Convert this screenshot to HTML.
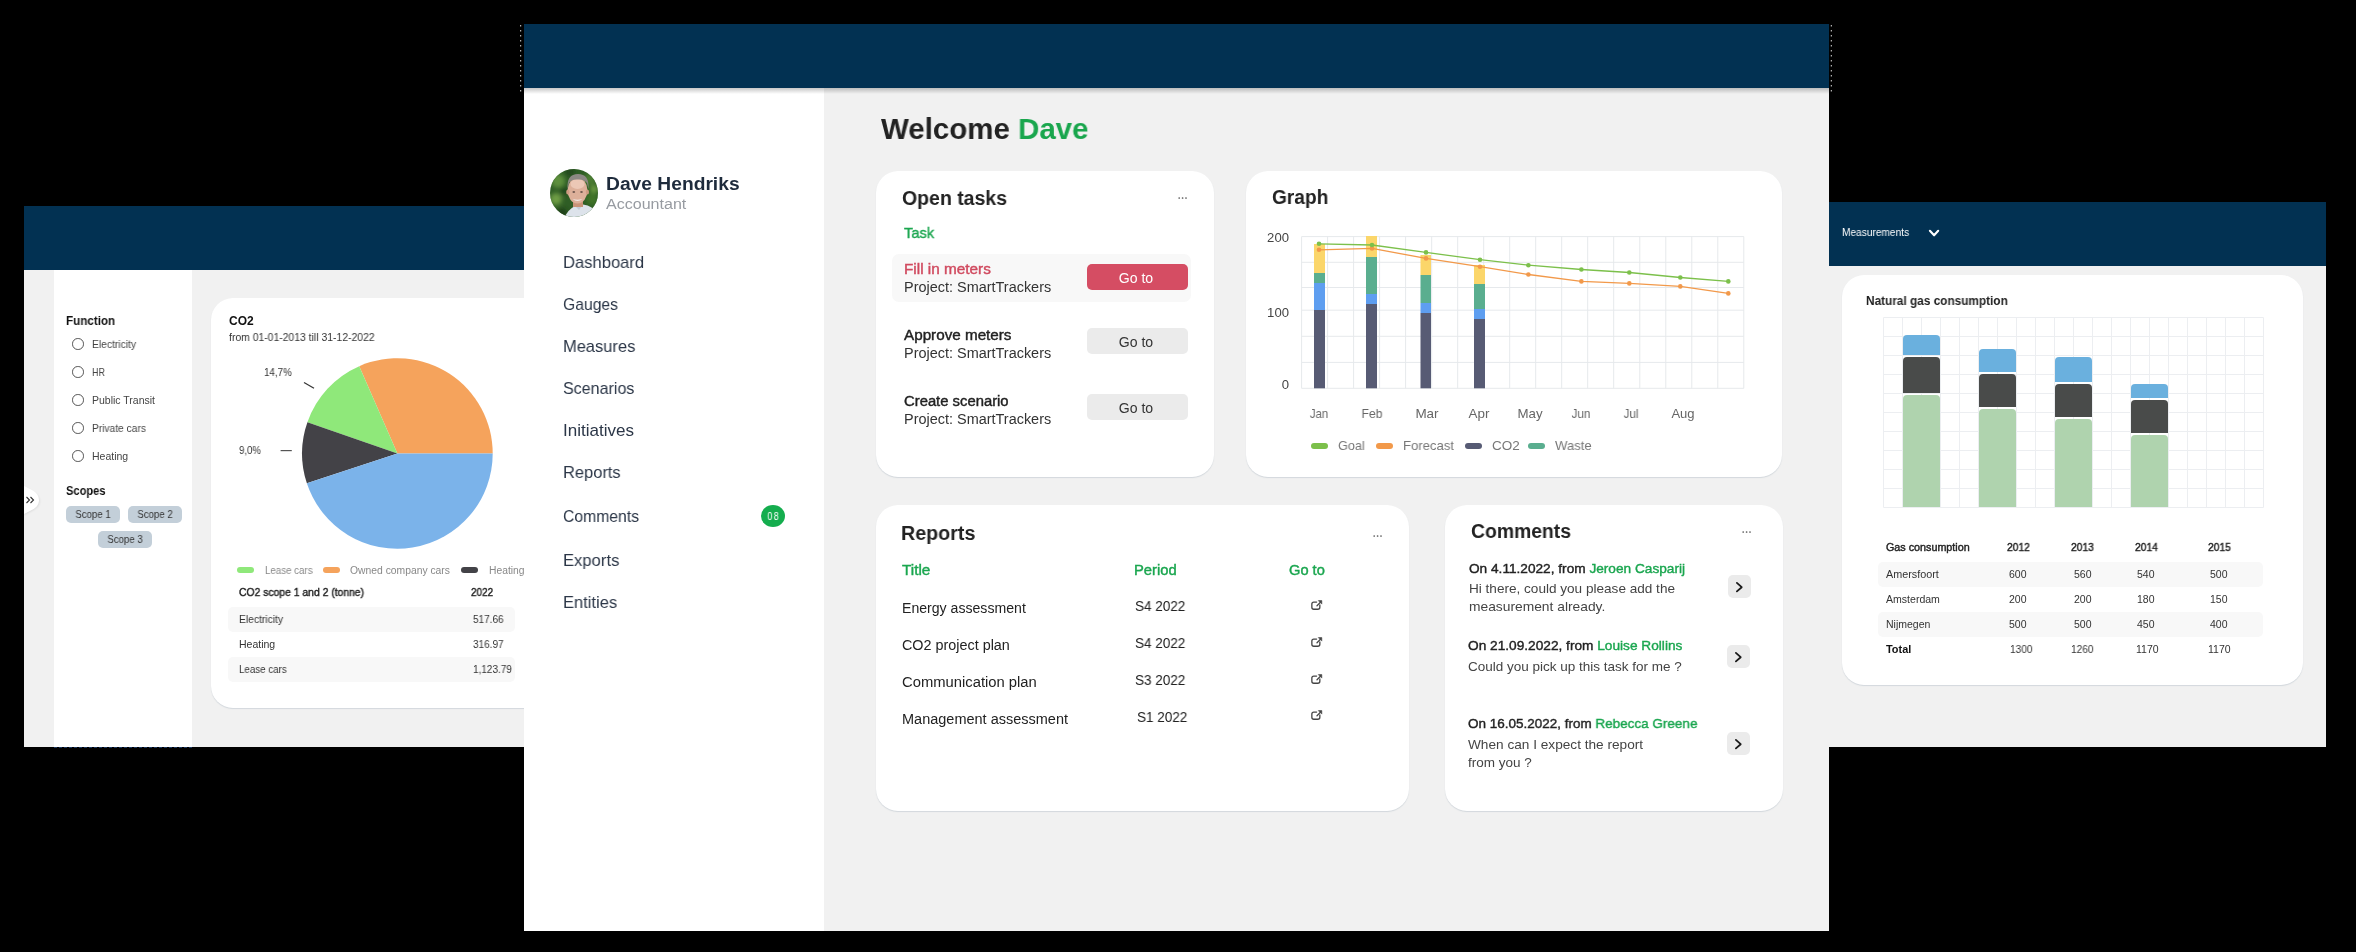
<!DOCTYPE html>
<html><head><meta charset="utf-8"><style>
html,body{margin:0;padding:0;}
body{width:2356px;height:952px;background:#000;position:relative;overflow:hidden;font-family:"Liberation Sans",sans-serif;}
.t{position:absolute;line-height:1;white-space:nowrap;will-change:transform;}
</style></head><body>
<div style="position:absolute;left:24px;top:206px;width:500px;height:64px;background:#023152;"></div>
<div style="position:absolute;left:24px;top:270px;width:500px;height:477px;background:#f1f1f1;"></div>
<div style="position:absolute;left:54px;top:270px;width:138px;height:477px;background:#ffffff;"></div>
<svg style="position:absolute;left:24px;top:480px" width="20" height="40" viewBox="0 0 20 40"><defs><filter id="tsh" x="-50%" y="-50%" width="200%" height="200%"><feGaussianBlur stdDeviation="1.2"/></filter></defs><path d="M0 7 C5 10 15 12 15 20 C15 28 5 30 0 34 Z" fill="rgba(0,0,0,0.12)" filter="url(#tsh)" transform="translate(0.5,1)"/><path d="M0 6 C5 9 15 11 15 20 C15 29 5 31 0 34 Z" fill="#fff"/><path d="M2.5 17 L5.5 20 L2.5 23 M6.5 17 L9.5 20 L6.5 23" stroke="#333" stroke-width="1.1" fill="none"/></svg>
<div class="t" style="left:66px;top:314.64px;font-size:12px;color:#111;font-weight:700;transform:scaleX(0.9693);transform-origin:left 0;"><span>Function</span></div>
<div style="position:absolute;left:72px;top:338px;width:9.6px;height:9.6px;border:1.2px solid #555;border-radius:50%"></div>
<div class="t" style="left:92.2px;top:338.91px;font-size:10.5px;color:#444;font-weight:400;transform:scaleX(0.9814);transform-origin:left 0;"><span>Electricity</span></div>
<div style="position:absolute;left:72px;top:366px;width:9.6px;height:9.6px;border:1.2px solid #555;border-radius:50%"></div>
<div class="t" style="left:92.2px;top:366.91px;font-size:10.5px;color:#444;font-weight:400;transform:scaleX(0.8634);transform-origin:left 0;"><span>HR</span></div>
<div style="position:absolute;left:72px;top:394px;width:9.6px;height:9.6px;border:1.2px solid #555;border-radius:50%"></div>
<div class="t" style="left:92.2px;top:394.91px;font-size:10.5px;color:#444;font-weight:400;transform:scaleX(0.9947);transform-origin:left 0;"><span>Public Transit</span></div>
<div style="position:absolute;left:72px;top:422px;width:9.6px;height:9.6px;border:1.2px solid #555;border-radius:50%"></div>
<div class="t" style="left:92.2px;top:422.91px;font-size:10.5px;color:#444;font-weight:400;transform:scaleX(0.9723);transform-origin:left 0;"><span>Private cars</span></div>
<div style="position:absolute;left:72px;top:450px;width:9.6px;height:9.6px;border:1.2px solid #555;border-radius:50%"></div>
<div class="t" style="left:92.2px;top:450.91px;font-size:10.5px;color:#444;font-weight:400;transform:scaleX(0.9889);transform-origin:left 0;"><span>Heating</span></div>
<div class="t" style="left:66px;top:485.24px;font-size:12px;color:#111;font-weight:700;transform:scaleX(0.9253);transform-origin:left 0;"><span>Scopes</span></div>
<div style="position:absolute;left:66px;top:506px;width:54px;height:16.5px;background:#c3cfd9;border-radius:5px"></div>
<div class="t" style="left:-207.0px;width:600px;text-align:center;top:508.91px;font-size:10.5px;color:#333;font-weight:400;transform:scaleX(0.9161);transform-origin:center 0;"><span>Scope 1</span></div>
<div style="position:absolute;left:128px;top:506px;width:54px;height:16.5px;background:#c3cfd9;border-radius:5px"></div>
<div class="t" style="left:-145.0px;width:600px;text-align:center;top:508.91px;font-size:10.5px;color:#333;font-weight:400;transform:scaleX(0.9161);transform-origin:center 0;"><span>Scope 2</span></div>
<div style="position:absolute;left:98.3px;top:531.4px;width:53.7px;height:16.399999999999977px;background:#c3cfd9;border-radius:5px"></div>
<div class="t" style="left:-174.85px;width:600px;text-align:center;top:534.31px;font-size:10.5px;color:#333;font-weight:400;transform:scaleX(0.9161);transform-origin:center 0;"><span>Scope 3</span></div>
<div style="position:absolute;left:211px;top:298px;width:349px;height:410px;background:#fff;border-radius:22px;box-shadow:0 1px 1px rgba(120,140,160,0.25)"></div>
<div class="t" style="left:229px;top:314.84px;font-size:12px;color:#111;font-weight:700;"><span>CO2</span></div>
<div class="t" style="left:229px;top:332.11px;font-size:10.5px;color:#333;font-weight:400;transform:scaleX(0.9898);transform-origin:left 0;"><span>from 01-01-2013 till 31-12-2022</span></div>
<svg style="position:absolute;left:0;top:0" width="2356" height="952"><path d="M397.4 453.5 L492.70 453.50 A95.3 95.3 0 0 0 359.25 366.17 Z" fill="#f5a35c"/><path d="M397.4 453.5 L359.25 366.17 A95.3 95.3 0 0 0 307.40 422.16 Z" fill="#8fe87a"/><path d="M397.4 453.5 L307.40 422.16 A95.3 95.3 0 0 0 306.87 483.27 Z" fill="#434247"/><path d="M397.4 453.5 L306.87 483.27 A95.3 95.3 0 0 0 492.70 453.50 Z" fill="#7bb3ea"/><line x1="304" y1="382.4" x2="314" y2="388.2" stroke="#333" stroke-width="1.2"/><line x1="280.6" y1="450.6" x2="291.8" y2="450.6" stroke="#555" stroke-width="1.2"/></svg>
<div class="t" style="left:264px;top:367.41px;font-size:10.5px;color:#333;font-weight:400;transform:scaleX(0.9335);transform-origin:left 0;"><span>14,7%</span></div>
<div class="t" style="left:239px;top:444.51px;font-size:10.5px;color:#333;font-weight:400;transform:scaleX(0.9191);transform-origin:left 0;"><span>9,0%</span></div>
<div style="position:absolute;left:237px;top:567.3px;width:17px;height:5.5px;background:#8fe87a;border-radius:3px"></div>
<div class="t" style="left:264.6px;top:565.63px;font-size:10px;color:#888;font-weight:400;transform:scaleX(0.9709);transform-origin:left 0;"><span>Lease cars</span></div>
<div style="position:absolute;left:323px;top:567.3px;width:17px;height:5.5px;background:#f5a35c;border-radius:3px"></div>
<div class="t" style="left:350.4px;top:565.63px;font-size:10px;color:#888;font-weight:400;transform:scaleX(1.0339);transform-origin:left 0;"><span>Owned company cars</span></div>
<div style="position:absolute;left:461px;top:567.3px;width:17px;height:5.5px;background:#434247;border-radius:3px"></div>
<div class="t" style="left:488.6px;top:565.63px;font-size:10px;color:#888;font-weight:400;transform:scaleX(1.0299);transform-origin:left 0;"><span>Heating</span></div>
<div class="t" style="left:239.3px;top:586.81px;font-size:10.5px;color:#222;font-weight:400;transform:scaleX(0.9868);transform-origin:left 0;-webkit-text-stroke:0.4px currentColor;"><span>CO2 scope 1 and 2 (tonne)</span></div>
<div class="t" style="left:471.2px;top:586.81px;font-size:10.5px;color:#222;font-weight:400;transform:scaleX(0.9461);transform-origin:left 0;-webkit-text-stroke:0.4px currentColor;"><span>2022</span></div>
<div style="position:absolute;left:228px;top:607px;width:287px;height:25px;background:#f8f8f8;border-radius:5px"></div>
<div style="position:absolute;left:228px;top:657px;width:287px;height:25px;background:#f8f8f8;border-radius:5px"></div>
<div class="t" style="left:239.3px;top:613.71px;font-size:10.5px;color:#333;font-weight:400;transform:scaleX(0.9814);transform-origin:left 0;"><span>Electricity</span></div>
<div class="t" style="left:473.3px;top:613.71px;font-size:10.5px;color:#333;font-weight:400;transform:scaleX(0.9525);transform-origin:left 0;"><span>517.66</span></div>
<div class="t" style="left:239.3px;top:639.01px;font-size:10.5px;color:#333;font-weight:400;transform:scaleX(0.9889);transform-origin:left 0;"><span>Heating</span></div>
<div class="t" style="left:473.3px;top:639.01px;font-size:10.5px;color:#333;font-weight:400;transform:scaleX(0.9525);transform-origin:left 0;"><span>316.97</span></div>
<div class="t" style="left:239.3px;top:663.51px;font-size:10.5px;color:#333;font-weight:400;transform:scaleX(0.9304);transform-origin:left 0;"><span>Lease cars</span></div>
<div class="t" style="left:473.3px;top:663.51px;font-size:10.5px;color:#333;font-weight:400;transform:scaleX(0.9517);transform-origin:left 0;"><span>1,123.79</span></div>
<div style="position:absolute;left:1829px;top:202px;width:497px;height:64px;background:#023152;"></div>
<div style="position:absolute;left:1829px;top:266px;width:497px;height:481px;background:#f1f1f1;"></div>
<div class="t" style="left:1842px;top:227.11px;font-size:10.5px;color:#fff;font-weight:400;transform:scaleX(0.9661);transform-origin:left 0;"><span>Measurements</span></div>
<svg style="position:absolute;left:1927px;top:228px" width="14" height="10"><path d="M2.9 2.8 L7.1 7.3 L11.2 2.8" stroke="#fff" stroke-width="2.1" fill="none" stroke-linecap="round" stroke-linejoin="round"/></svg>
<div style="position:absolute;left:1842px;top:275px;width:461px;height:410px;background:#fff;border-radius:22px;box-shadow:0 1px 1px rgba(120,140,160,0.25)"></div>
<div class="t" style="left:1866.4px;top:294.84px;font-size:12px;color:#222;font-weight:700;transform:scaleX(0.9845);transform-origin:left 0;"><span>Natural gas consumption</span></div>
<svg style="position:absolute;left:0;top:0" width="2356" height="952"><line x1="1883.5" y1="317.5" x2="1883.5" y2="507.5" stroke="#eceef1" stroke-width="1"/><line x1="1902.5" y1="317.5" x2="1902.5" y2="507.5" stroke="#eceef1" stroke-width="1"/><line x1="1921.5" y1="317.5" x2="1921.5" y2="507.5" stroke="#eceef1" stroke-width="1"/><line x1="1940.5" y1="317.5" x2="1940.5" y2="507.5" stroke="#eceef1" stroke-width="1"/><line x1="1959.5" y1="317.5" x2="1959.5" y2="507.5" stroke="#eceef1" stroke-width="1"/><line x1="1978.5" y1="317.5" x2="1978.5" y2="507.5" stroke="#eceef1" stroke-width="1"/><line x1="1997.5" y1="317.5" x2="1997.5" y2="507.5" stroke="#eceef1" stroke-width="1"/><line x1="2016.5" y1="317.5" x2="2016.5" y2="507.5" stroke="#eceef1" stroke-width="1"/><line x1="2035.5" y1="317.5" x2="2035.5" y2="507.5" stroke="#eceef1" stroke-width="1"/><line x1="2054.5" y1="317.5" x2="2054.5" y2="507.5" stroke="#eceef1" stroke-width="1"/><line x1="2073.5" y1="317.5" x2="2073.5" y2="507.5" stroke="#eceef1" stroke-width="1"/><line x1="2092.5" y1="317.5" x2="2092.5" y2="507.5" stroke="#eceef1" stroke-width="1"/><line x1="2111.5" y1="317.5" x2="2111.5" y2="507.5" stroke="#eceef1" stroke-width="1"/><line x1="2130.5" y1="317.5" x2="2130.5" y2="507.5" stroke="#eceef1" stroke-width="1"/><line x1="2149.5" y1="317.5" x2="2149.5" y2="507.5" stroke="#eceef1" stroke-width="1"/><line x1="2168.5" y1="317.5" x2="2168.5" y2="507.5" stroke="#eceef1" stroke-width="1"/><line x1="2187.5" y1="317.5" x2="2187.5" y2="507.5" stroke="#eceef1" stroke-width="1"/><line x1="2206.5" y1="317.5" x2="2206.5" y2="507.5" stroke="#eceef1" stroke-width="1"/><line x1="2225.5" y1="317.5" x2="2225.5" y2="507.5" stroke="#eceef1" stroke-width="1"/><line x1="2244.5" y1="317.5" x2="2244.5" y2="507.5" stroke="#eceef1" stroke-width="1"/><line x1="2263.5" y1="317.5" x2="2263.5" y2="507.5" stroke="#eceef1" stroke-width="1"/><line x1="1883.5" y1="317.5" x2="2263.5" y2="317.5" stroke="#eceef1" stroke-width="1"/><line x1="1883.5" y1="336.5" x2="2263.5" y2="336.5" stroke="#eceef1" stroke-width="1"/><line x1="1883.5" y1="355.5" x2="2263.5" y2="355.5" stroke="#eceef1" stroke-width="1"/><line x1="1883.5" y1="374.5" x2="2263.5" y2="374.5" stroke="#eceef1" stroke-width="1"/><line x1="1883.5" y1="393.5" x2="2263.5" y2="393.5" stroke="#eceef1" stroke-width="1"/><line x1="1883.5" y1="412.5" x2="2263.5" y2="412.5" stroke="#eceef1" stroke-width="1"/><line x1="1883.5" y1="431.5" x2="2263.5" y2="431.5" stroke="#eceef1" stroke-width="1"/><line x1="1883.5" y1="450.5" x2="2263.5" y2="450.5" stroke="#eceef1" stroke-width="1"/><line x1="1883.5" y1="469.5" x2="2263.5" y2="469.5" stroke="#eceef1" stroke-width="1"/><line x1="1883.5" y1="488.5" x2="2263.5" y2="488.5" stroke="#eceef1" stroke-width="1"/><line x1="1883.5" y1="507.5" x2="2263.5" y2="507.5" stroke="#eceef1" stroke-width="1"/><path d="M1903 507 L1903 399 Q1903 395 1907 395 L1936 395 Q1940 395 1940 399 L1940 507 Z" fill="#afd3ae"/><path d="M1903 393 L1903 361 Q1903 357 1907 357 L1936 357 Q1940 357 1940 361 L1940 393 Z" fill="#494b4a"/><path d="M1903 355 L1903 339 Q1903 335 1907 335 L1936 335 Q1940 335 1940 339 L1940 355 Z" fill="#6ab0de"/><path d="M1979 507 L1979 413 Q1979 409 1983 409 L2012 409 Q2016 409 2016 413 L2016 507 Z" fill="#afd3ae"/><path d="M1979 407 L1979 378 Q1979 374 1983 374 L2012 374 Q2016 374 2016 378 L2016 407 Z" fill="#494b4a"/><path d="M1979 372 L1979 353 Q1979 349 1983 349 L2012 349 Q2016 349 2016 353 L2016 372 Z" fill="#6ab0de"/><path d="M2055 507 L2055 423 Q2055 419 2059 419 L2088 419 Q2092 419 2092 423 L2092 507 Z" fill="#afd3ae"/><path d="M2055 417 L2055 388 Q2055 384 2059 384 L2088 384 Q2092 384 2092 388 L2092 417 Z" fill="#494b4a"/><path d="M2055 382 L2055 361 Q2055 357 2059 357 L2088 357 Q2092 357 2092 361 L2092 382 Z" fill="#6ab0de"/><path d="M2131 507 L2131 439 Q2131 435 2135 435 L2164 435 Q2168 435 2168 439 L2168 507 Z" fill="#afd3ae"/><path d="M2131 433 L2131 404 Q2131 400 2135 400 L2164 400 Q2168 400 2168 404 L2168 433 Z" fill="#494b4a"/><path d="M2131 398 L2131 388 Q2131 384 2135 384 L2164 384 Q2168 384 2168 388 L2168 398 Z" fill="#6ab0de"/></svg>
<div class="t" style="left:1886.1px;top:542.11px;font-size:10.5px;color:#222;font-weight:400;transform:scaleX(1.0242);transform-origin:left 0;-webkit-text-stroke:0.4px currentColor;"><span>Gas consumption</span></div>
<div class="t" style="left:2007px;top:542.11px;font-size:10.5px;color:#222;font-weight:400;transform:scaleX(0.9761);transform-origin:left 0;-webkit-text-stroke:0.4px currentColor;"><span>2012</span></div>
<div class="t" style="left:2070.8px;top:542.11px;font-size:10.5px;color:#222;font-weight:400;transform:scaleX(0.9761);transform-origin:left 0;-webkit-text-stroke:0.4px currentColor;"><span>2013</span></div>
<div class="t" style="left:2135px;top:542.11px;font-size:10.5px;color:#222;font-weight:400;transform:scaleX(0.9761);transform-origin:left 0;-webkit-text-stroke:0.4px currentColor;"><span>2014</span></div>
<div class="t" style="left:2207.8px;top:542.11px;font-size:10.5px;color:#222;font-weight:400;transform:scaleX(0.9761);transform-origin:left 0;-webkit-text-stroke:0.4px currentColor;"><span>2015</span></div>
<div style="position:absolute;left:1878px;top:562px;width:385px;height:25px;background:#f8f8f8;border-radius:5px"></div>
<div style="position:absolute;left:1878px;top:612px;width:385px;height:25px;background:#f8f8f8;border-radius:5px"></div>
<div class="t" style="left:1886.1px;top:569.11px;font-size:10.5px;color:#333;font-weight:400;transform:scaleX(1.0280);transform-origin:left 0;"><span>Amersfoort</span></div>
<div class="t" style="left:2009px;top:569.11px;font-size:10.5px;color:#333;font-weight:400;transform:scaleX(0.9754);transform-origin:left 0;"><span>600</span></div>
<div class="t" style="left:2074px;top:569.11px;font-size:10.5px;color:#333;font-weight:400;transform:scaleX(0.9754);transform-origin:left 0;"><span>560</span></div>
<div class="t" style="left:2137px;top:569.11px;font-size:10.5px;color:#333;font-weight:400;transform:scaleX(0.9754);transform-origin:left 0;"><span>540</span></div>
<div class="t" style="left:2209.8px;top:569.11px;font-size:10.5px;color:#333;font-weight:400;transform:scaleX(0.9754);transform-origin:left 0;"><span>500</span></div>
<div class="t" style="left:1886.1px;top:593.91px;font-size:10.5px;color:#333;font-weight:400;transform:scaleX(1.0040);transform-origin:left 0;"><span>Amsterdam</span></div>
<div class="t" style="left:2009px;top:593.91px;font-size:10.5px;color:#333;font-weight:400;transform:scaleX(0.9754);transform-origin:left 0;"><span>200</span></div>
<div class="t" style="left:2074px;top:593.91px;font-size:10.5px;color:#333;font-weight:400;transform:scaleX(0.9754);transform-origin:left 0;"><span>200</span></div>
<div class="t" style="left:2137px;top:593.91px;font-size:10.5px;color:#333;font-weight:400;transform:scaleX(0.9754);transform-origin:left 0;"><span>180</span></div>
<div class="t" style="left:2209.8px;top:593.91px;font-size:10.5px;color:#333;font-weight:400;transform:scaleX(0.9754);transform-origin:left 0;"><span>150</span></div>
<div class="t" style="left:1886.1px;top:618.91px;font-size:10.5px;color:#333;font-weight:400;transform:scaleX(1.0009);transform-origin:left 0;"><span>Nijmegen</span></div>
<div class="t" style="left:2009px;top:618.91px;font-size:10.5px;color:#333;font-weight:400;transform:scaleX(0.9754);transform-origin:left 0;"><span>500</span></div>
<div class="t" style="left:2074px;top:618.91px;font-size:10.5px;color:#333;font-weight:400;transform:scaleX(0.9754);transform-origin:left 0;"><span>500</span></div>
<div class="t" style="left:2137px;top:618.91px;font-size:10.5px;color:#333;font-weight:400;transform:scaleX(0.9754);transform-origin:left 0;"><span>450</span></div>
<div class="t" style="left:2209.8px;top:618.91px;font-size:10.5px;color:#333;font-weight:400;transform:scaleX(0.9754);transform-origin:left 0;"><span>400</span></div>
<div class="t" style="left:1886.1px;top:643.81px;font-size:10.5px;color:#111;font-weight:700;transform:scaleX(1.0406);transform-origin:left 0;"><span>Total</span></div>
<div class="t" style="left:2009.5px;top:643.81px;font-size:10.5px;color:#333;font-weight:400;transform:scaleX(0.9632);transform-origin:left 0;"><span>1300</span></div>
<div class="t" style="left:2071px;top:643.81px;font-size:10.5px;color:#333;font-weight:400;transform:scaleX(0.9632);transform-origin:left 0;"><span>1260</span></div>
<div class="t" style="left:2135.5px;top:643.81px;font-size:10.5px;color:#333;font-weight:400;transform:scaleX(0.9959);transform-origin:left 0;"><span>1170</span></div>
<div class="t" style="left:2208px;top:643.81px;font-size:10.5px;color:#333;font-weight:400;transform:scaleX(0.9959);transform-origin:left 0;"><span>1170</span></div>
<div style="position:absolute;left:524px;top:24px;width:1305px;height:64px;background:#023152;"></div>
<div style="position:absolute;left:524px;top:88px;width:300px;height:843px;background:#fff;"></div>
<div style="position:absolute;left:824px;top:88px;width:1005px;height:843px;background:#f1f1f1;"></div>
<div style="position:absolute;left:524px;top:88px;width:1305px;height:6px;background:linear-gradient(rgba(0,0,0,0.22),rgba(0,0,0,0));"></div>
<svg style="position:absolute;left:0;top:0" width="2356" height="952"><line x1="520.7" y1="25" x2="520.7" y2="95" stroke="#fff" stroke-width="1" stroke-dasharray="1.5 3.5" opacity="0.85"/><line x1="1831.3" y1="25" x2="1831.3" y2="95" stroke="#fff" stroke-width="1" stroke-dasharray="1.5 3.5" opacity="0.85"/><line x1="54" y1="747.5" x2="192" y2="747.5" stroke="#1d3d6b" stroke-width="1" stroke-dasharray="3 2" opacity="0.9"/></svg>
<svg style="position:absolute;left:550px;top:169px" width="48" height="48" viewBox="0 0 48 48"><defs><clipPath id="av"><circle cx="24" cy="24" r="24"/></clipPath><filter id="bl" x="-20%" y="-20%" width="140%" height="140%"><feGaussianBlur stdDeviation="2.2"/></filter><filter id="bl2"><feGaussianBlur stdDeviation="0.6"/></filter></defs><g clip-path="url(#av)"><rect width="48" height="48" fill="#2f5d25"/><g filter="url(#bl)"><circle cx="8" cy="12" r="7" fill="#5d8f3c"/><circle cx="40" cy="10" r="6" fill="#4b7d30"/><circle cx="6" cy="30" r="6" fill="#6e9c44"/><circle cx="42" cy="30" r="6" fill="#3f7328"/><circle cx="20" cy="3" r="5" fill="#244a1c"/><circle cx="12" cy="44" r="5" fill="#1f3f18"/><circle cx="14" cy="22" r="4" fill="#1e461a"/><circle cx="44" cy="20" r="4" fill="#6b9a3f"/></g><g filter="url(#bl2)"><path d="M14 50 Q17 41 25 37 L33 35.5 Q43 37 47 44 L47 50 Z" fill="#dde3eb"/><path d="M25 37 L29 41 L33 35.5 Z" fill="#c3cbd6"/><rect x="23" y="30" width="10" height="8" fill="#c99378"/><ellipse cx="27.5" cy="21.5" rx="10" ry="13" fill="#ddb09a"/><ellipse cx="27.5" cy="15" rx="7" ry="5" fill="#ecc8b6"/><ellipse cx="17.8" cy="23" rx="1.6" ry="2.6" fill="#cf9c83"/><ellipse cx="37.4" cy="23" rx="1.6" ry="2.6" fill="#cf9c83"/><path d="M17.5 20 Q16.5 5 28 5 Q39.5 5 38.5 20 L37 14 Q34 10 28 10.5 Q21 10 19 14 Z" fill="#8c8883"/><ellipse cx="23.8" cy="23" rx="1.4" ry="0.8" fill="#4a3a35"/><ellipse cx="31.5" cy="23" rx="1.4" ry="0.8" fill="#4a3a35"/><path d="M22.5 30 Q27.5 34 32.5 30 Q27.5 31.5 22.5 30 Z" fill="#f2e8e4"/></g></g></svg>
<div class="t" style="left:606px;top:175.36px;font-size:18px;color:#1e2b3c;font-weight:700;transform:scaleX(1.0683);transform-origin:left 0;"><span>Dave Hendriks</span></div>
<div class="t" style="left:606px;top:196.55px;font-size:14px;color:#979ba1;font-weight:400;transform:scaleX(1.1461);transform-origin:left 0;"><span>Accountant</span></div>
<div class="t" style="left:562.8px;top:254.21px;font-size:17px;color:#2b3647;font-weight:400;transform:scaleX(0.9751);transform-origin:left 0;"><span>Dashboard</span></div>
<div class="t" style="left:562.8px;top:296.21px;font-size:17px;color:#2b3647;font-weight:400;transform:scaleX(0.9236);transform-origin:left 0;"><span>Gauges</span></div>
<div class="t" style="left:562.8px;top:338.21px;font-size:17px;color:#2b3647;font-weight:400;transform:scaleX(0.9686);transform-origin:left 0;"><span>Measures</span></div>
<div class="t" style="left:562.8px;top:380.21px;font-size:17px;color:#2b3647;font-weight:400;transform:scaleX(0.9443);transform-origin:left 0;"><span>Scenarios</span></div>
<div class="t" style="left:562.8px;top:422.21px;font-size:17px;color:#2b3647;font-weight:400;transform:scaleX(1.0018);transform-origin:left 0;"><span>Initiatives</span></div>
<div class="t" style="left:562.8px;top:464.21px;font-size:17px;color:#2b3647;font-weight:400;transform:scaleX(0.9676);transform-origin:left 0;"><span>Reports</span></div>
<div class="t" style="left:562.8px;top:508.41px;font-size:17px;color:#2b3647;font-weight:400;transform:scaleX(0.9247);transform-origin:left 0;"><span>Comments</span></div>
<div class="t" style="left:562.8px;top:551.71px;font-size:17px;color:#2b3647;font-weight:400;transform:scaleX(0.9767);transform-origin:left 0;"><span>Exports</span></div>
<div class="t" style="left:562.8px;top:593.71px;font-size:17px;color:#2b3647;font-weight:400;transform:scaleX(0.9722);transform-origin:left 0;"><span>Entities</span></div>
<div style="position:absolute;left:761px;top:505px;width:24px;height:22px;border-radius:50%;background:#14ad4e"></div>
<div class="t" style="left:473px;width:600px;text-align:center;top:510.91px;font-size:10.5px;color:#fff;font-weight:400;transform:scaleX(0.8796);transform-origin:center 0;"><span>0<span style="margin-left:1.5px">8</span></span></div>
<div class="t" style="left:881px;top:113.60px;font-size:30px;color:#222;font-weight:700;transform:scaleX(0.9824);transform-origin:left 0;"><span>Welcome <span style="color:#19a64d">Dave</span></span></div>
<div style="position:absolute;left:876px;top:171px;width:338px;height:306px;background:#fff;border-radius:22px;box-shadow:0 1px 1px rgba(120,140,160,0.25)"></div>
<div class="t" style="left:902px;top:187.87px;font-size:20px;color:#222;font-weight:700;transform:scaleX(0.9738);transform-origin:left 0;"><span>Open tasks</span></div>
<svg style="position:absolute;left:1178px;top:196.0px" width="12" height="4"><circle cx="1.2" cy="2" r="0.85" fill="#555"/><circle cx="4.6" cy="2" r="0.85" fill="#555"/><circle cx="8" cy="2" r="0.85" fill="#555"/></svg>
<div class="t" style="left:904px;top:225.30px;font-size:15px;color:#1aa64f;font-weight:400;transform:scaleX(0.9791);transform-origin:left 0;-webkit-text-stroke:0.4px currentColor;"><span>Task</span></div>
<div style="position:absolute;left:892px;top:254px;width:299px;height:48px;background:#f8f8f8;border-radius:7px"></div>
<div class="t" style="left:904px;top:262.15px;font-size:14px;color:#d04a5f;font-weight:400;transform:scaleX(1.0938);transform-origin:left 0;-webkit-text-stroke:0.4px currentColor;"><span>Fill in meters</span></div>
<div class="t" style="left:904px;top:280.15px;font-size:14px;color:#333;font-weight:400;transform:scaleX(1.0321);transform-origin:left 0;"><span>Project: SmartTrackers</span></div>
<div style="position:absolute;left:1087px;top:264px;width:101px;height:26px;background:#d54d63;border-radius:5px"></div>
<div class="t" style="left:836px;width:600px;text-align:center;top:271.25px;font-size:14px;color:#fff;font-weight:400;transform:scaleX(1.0044);transform-origin:center 0;"><span>Go to</span></div>
<div class="t" style="left:904px;top:327.85px;font-size:14px;color:#222;font-weight:400;transform:scaleX(1.0877);transform-origin:left 0;-webkit-text-stroke:0.4px currentColor;"><span>Approve meters</span></div>
<div class="t" style="left:904px;top:346.15px;font-size:14px;color:#333;font-weight:400;transform:scaleX(1.0321);transform-origin:left 0;"><span>Project: SmartTrackers</span></div>
<div style="position:absolute;left:1087px;top:328px;width:101px;height:26px;background:#ebebeb;border-radius:5px"></div>
<div class="t" style="left:836px;width:600px;text-align:center;top:335.25px;font-size:14px;color:#333;font-weight:400;transform:scaleX(1.0044);transform-origin:center 0;"><span>Go to</span></div>
<div class="t" style="left:904px;top:394.05px;font-size:14px;color:#222;font-weight:400;transform:scaleX(1.0584);transform-origin:left 0;-webkit-text-stroke:0.4px currentColor;"><span>Create scenario</span></div>
<div class="t" style="left:904px;top:411.85px;font-size:14px;color:#333;font-weight:400;transform:scaleX(1.0321);transform-origin:left 0;"><span>Project: SmartTrackers</span></div>
<div style="position:absolute;left:1087px;top:394px;width:101px;height:26px;background:#ebebeb;border-radius:5px"></div>
<div class="t" style="left:836px;width:600px;text-align:center;top:401.25px;font-size:14px;color:#333;font-weight:400;transform:scaleX(1.0044);transform-origin:center 0;"><span>Go to</span></div>
<div style="position:absolute;left:1246px;top:171px;width:536px;height:306px;background:#fff;border-radius:22px;box-shadow:0 1px 1px rgba(120,140,160,0.25)"></div>
<div class="t" style="left:1271.5px;top:186.77px;font-size:20px;color:#222;font-weight:700;transform:scaleX(0.9558);transform-origin:left 0;"><span>Graph</span></div>
<svg style="position:absolute;left:0;top:0" width="2356" height="952"><line x1="1301.6" y1="236.6" x2="1301.6" y2="388.3" stroke="#e6e9ec" stroke-width="1"/><line x1="1327.6" y1="236.6" x2="1327.6" y2="388.3" stroke="#e6e9ec" stroke-width="1"/><line x1="1353.6" y1="236.6" x2="1353.6" y2="388.3" stroke="#e6e9ec" stroke-width="1"/><line x1="1379.6" y1="236.6" x2="1379.6" y2="388.3" stroke="#e6e9ec" stroke-width="1"/><line x1="1405.6" y1="236.6" x2="1405.6" y2="388.3" stroke="#e6e9ec" stroke-width="1"/><line x1="1431.7" y1="236.6" x2="1431.7" y2="388.3" stroke="#e6e9ec" stroke-width="1"/><line x1="1457.7" y1="236.6" x2="1457.7" y2="388.3" stroke="#e6e9ec" stroke-width="1"/><line x1="1483.7" y1="236.6" x2="1483.7" y2="388.3" stroke="#e6e9ec" stroke-width="1"/><line x1="1509.7" y1="236.6" x2="1509.7" y2="388.3" stroke="#e6e9ec" stroke-width="1"/><line x1="1535.7" y1="236.6" x2="1535.7" y2="388.3" stroke="#e6e9ec" stroke-width="1"/><line x1="1561.7" y1="236.6" x2="1561.7" y2="388.3" stroke="#e6e9ec" stroke-width="1"/><line x1="1587.7" y1="236.6" x2="1587.7" y2="388.3" stroke="#e6e9ec" stroke-width="1"/><line x1="1613.7" y1="236.6" x2="1613.7" y2="388.3" stroke="#e6e9ec" stroke-width="1"/><line x1="1639.8" y1="236.6" x2="1639.8" y2="388.3" stroke="#e6e9ec" stroke-width="1"/><line x1="1665.8" y1="236.6" x2="1665.8" y2="388.3" stroke="#e6e9ec" stroke-width="1"/><line x1="1691.8" y1="236.6" x2="1691.8" y2="388.3" stroke="#e6e9ec" stroke-width="1"/><line x1="1717.8" y1="236.6" x2="1717.8" y2="388.3" stroke="#e6e9ec" stroke-width="1"/><line x1="1743.8" y1="236.6" x2="1743.8" y2="388.3" stroke="#e6e9ec" stroke-width="1"/><line x1="1301.6" y1="236.6" x2="1743.8" y2="236.6" stroke="#e6e9ec" stroke-width="1"/><line x1="1301.6" y1="262.3" x2="1743.8" y2="262.3" stroke="#e6e9ec" stroke-width="1"/><line x1="1301.6" y1="287.5" x2="1743.8" y2="287.5" stroke="#e6e9ec" stroke-width="1"/><line x1="1301.6" y1="310.2" x2="1743.8" y2="310.2" stroke="#e6e9ec" stroke-width="1"/><line x1="1301.6" y1="336.3" x2="1743.8" y2="336.3" stroke="#e6e9ec" stroke-width="1"/><line x1="1301.6" y1="362.4" x2="1743.8" y2="362.4" stroke="#e6e9ec" stroke-width="1"/><line x1="1301.6" y1="388.3" x2="1743.8" y2="388.3" stroke="#e6e9ec" stroke-width="1"/><rect x="1314" y="310" width="11" height="78.30000000000001" fill="#575b74"/><rect x="1314" y="283" width="11" height="27" fill="#5e9ef0"/><rect x="1314" y="273" width="11" height="10" fill="#5aae8f"/><rect x="1314" y="244" width="11" height="29" fill="#fbd66a"/><rect x="1366" y="304" width="11" height="84.30000000000001" fill="#575b74"/><rect x="1366" y="294" width="11" height="10" fill="#5e9ef0"/><rect x="1366" y="257" width="11" height="37" fill="#5aae8f"/><rect x="1366" y="236" width="11" height="21" fill="#fbd66a"/><rect x="1420.5" y="313" width="10.5" height="75.30000000000001" fill="#575b74"/><rect x="1420.5" y="303" width="10.5" height="10" fill="#5e9ef0"/><rect x="1420.5" y="275" width="10.5" height="28" fill="#5aae8f"/><rect x="1420.5" y="255" width="10.5" height="20" fill="#fbd66a"/><rect x="1474" y="319" width="11" height="69.30000000000001" fill="#575b74"/><rect x="1474" y="309" width="11" height="10" fill="#5e9ef0"/><rect x="1474" y="284" width="11" height="25" fill="#5aae8f"/><rect x="1474" y="265" width="11" height="19" fill="#fbd66a"/><polyline points="1319,249.8 1372,248.4 1426,258.4 1480,266.7 1528.4,274.5 1581.4,281.4 1629.3,283.4 1680.3,286.4 1728.3,293.4" fill="none" stroke="#f2994a" stroke-width="1.3"/><circle cx="1319" cy="249.8" r="2.3" fill="#f2994a"/><circle cx="1372" cy="248.4" r="2.3" fill="#f2994a"/><circle cx="1426" cy="258.4" r="2.3" fill="#f2994a"/><circle cx="1480" cy="266.7" r="2.3" fill="#f2994a"/><circle cx="1528.4" cy="274.5" r="2.3" fill="#f2994a"/><circle cx="1581.4" cy="281.4" r="2.3" fill="#f2994a"/><circle cx="1629.3" cy="283.4" r="2.3" fill="#f2994a"/><circle cx="1680.3" cy="286.4" r="2.3" fill="#f2994a"/><circle cx="1728.3" cy="293.4" r="2.3" fill="#f2994a"/><polyline points="1319,243.8 1372,245 1426,252.4 1480,259.7 1528.4,265.2 1581.4,269.5 1629.3,272.5 1680.3,277.5 1728.3,281.4" fill="none" stroke="#7cc04b" stroke-width="1.3"/><circle cx="1319" cy="243.8" r="2.3" fill="#7cc04b"/><circle cx="1372" cy="245" r="2.3" fill="#7cc04b"/><circle cx="1426" cy="252.4" r="2.3" fill="#7cc04b"/><circle cx="1480" cy="259.7" r="2.3" fill="#7cc04b"/><circle cx="1528.4" cy="265.2" r="2.3" fill="#7cc04b"/><circle cx="1581.4" cy="269.5" r="2.3" fill="#7cc04b"/><circle cx="1629.3" cy="272.5" r="2.3" fill="#7cc04b"/><circle cx="1680.3" cy="277.5" r="2.3" fill="#7cc04b"/><circle cx="1728.3" cy="281.4" r="2.3" fill="#7cc04b"/></svg>
<div class="t" style="left:689px;width:600px;text-align:right;top:230.79px;font-size:13px;color:#444;font-weight:400;transform:scaleX(1.0091);transform-origin:right 0;"><span>200</span></div>
<div class="t" style="left:689px;width:600px;text-align:right;top:305.99px;font-size:13px;color:#444;font-weight:400;transform:scaleX(1.0091);transform-origin:right 0;"><span>100</span></div>
<div class="t" style="left:689px;width:600px;text-align:right;top:377.59px;font-size:13px;color:#444;font-weight:400;transform:scaleX(1.0091);transform-origin:right 0;"><span>0</span></div>
<div class="t" style="left:1019px;width:600px;text-align:center;top:406.99px;font-size:13px;color:#666;font-weight:400;transform:scaleX(0.8680);transform-origin:center 0;"><span>Jan</span></div>
<div class="t" style="left:1072px;width:600px;text-align:center;top:406.99px;font-size:13px;color:#666;font-weight:400;transform:scaleX(0.9328);transform-origin:center 0;"><span>Feb</span></div>
<div class="t" style="left:1127px;width:600px;text-align:center;top:406.99px;font-size:13px;color:#666;font-weight:400;transform:scaleX(1.0361);transform-origin:center 0;"><span>Mar</span></div>
<div class="t" style="left:1179px;width:600px;text-align:center;top:406.99px;font-size:13px;color:#666;font-weight:400;transform:scaleX(1.0329);transform-origin:center 0;"><span>Apr</span></div>
<div class="t" style="left:1230px;width:600px;text-align:center;top:406.99px;font-size:13px;color:#666;font-weight:400;transform:scaleX(1.0219);transform-origin:center 0;"><span>May</span></div>
<div class="t" style="left:1281.4px;width:600px;text-align:center;top:406.99px;font-size:13px;color:#666;font-weight:400;transform:scaleX(0.9013);transform-origin:center 0;"><span>Jun</span></div>
<div class="t" style="left:1331px;width:600px;text-align:center;top:406.99px;font-size:13px;color:#666;font-weight:400;transform:scaleX(0.8962);transform-origin:center 0;"><span>Jul</span></div>
<div class="t" style="left:1382.6px;width:600px;text-align:center;top:406.99px;font-size:13px;color:#666;font-weight:400;transform:scaleX(1.0026);transform-origin:center 0;"><span>Aug</span></div>
<div style="position:absolute;left:1311px;top:442.5px;width:17px;height:6.0px;background:#7cc04b;border-radius:3px"></div>
<div class="t" style="left:1338px;top:439.07px;font-size:13.5px;color:#777;font-weight:400;transform:scaleX(0.9393);transform-origin:left 0;"><span>Goal</span></div>
<div style="position:absolute;left:1376.4px;top:442.5px;width:17.0px;height:6.0px;background:#f2994a;border-radius:3px"></div>
<div class="t" style="left:1403px;top:439.07px;font-size:13.5px;color:#777;font-weight:400;transform:scaleX(0.9709);transform-origin:left 0;"><span>Forecast</span></div>
<div style="position:absolute;left:1465px;top:442.5px;width:17px;height:6.0px;background:#575b74;border-radius:3px"></div>
<div class="t" style="left:1492px;top:439.07px;font-size:13.5px;color:#777;font-weight:400;"><span>CO2</span></div>
<div style="position:absolute;left:1528px;top:442.5px;width:17px;height:6.0px;background:#5aae8f;border-radius:3px"></div>
<div class="t" style="left:1555px;top:439.07px;font-size:13.5px;color:#777;font-weight:400;transform:scaleX(0.9718);transform-origin:left 0;"><span>Waste</span></div>
<div style="position:absolute;left:876px;top:505px;width:533px;height:306px;background:#fff;border-radius:22px;box-shadow:0 1px 1px rgba(120,140,160,0.25)"></div>
<div class="t" style="left:901.4px;top:523.07px;font-size:20px;color:#222;font-weight:700;transform:scaleX(0.9844);transform-origin:left 0;"><span>Reports</span></div>
<svg style="position:absolute;left:1373px;top:534.1999999999999px" width="12" height="4"><circle cx="1.2" cy="2" r="0.85" fill="#555"/><circle cx="4.6" cy="2" r="0.85" fill="#555"/><circle cx="8" cy="2" r="0.85" fill="#555"/></svg>
<div class="t" style="left:901.6px;top:563.35px;font-size:14px;color:#1aa64f;font-weight:400;transform:scaleX(1.0949);transform-origin:left 0;-webkit-text-stroke:0.4px currentColor;"><span>Title</span></div>
<div class="t" style="left:1133.6px;top:563.35px;font-size:14px;color:#1aa64f;font-weight:400;transform:scaleX(1.0551);transform-origin:left 0;-webkit-text-stroke:0.4px currentColor;"><span>Period</span></div>
<div class="t" style="left:1289px;top:563.35px;font-size:14px;color:#1aa64f;font-weight:400;transform:scaleX(1.0453);transform-origin:left 0;-webkit-text-stroke:0.4px currentColor;"><span>Go to</span></div>
<div class="t" style="left:901.6px;top:600.85px;font-size:14px;color:#222;font-weight:400;transform:scaleX(1.0069);transform-origin:left 0;"><span>Energy assessment</span></div>
<div class="t" style="left:1135px;top:599.05px;font-size:14px;color:#222;font-weight:400;transform:scaleX(0.9660);transform-origin:left 0;"><span>S4 2022</span></div>
<svg style="position:absolute;left:1308px;top:596.8px" width="16" height="16" viewBox="0 0 16 16"><path d="M8.6 5.05 H5.85 Q3.85 5.05 3.85 7.05 V10.25 Q3.85 12.25 5.85 12.25 H9.85 Q11.85 12.25 11.85 10.25 V8" fill="none" stroke="#444" stroke-width="1.3" stroke-linecap="round"/><path d="M9 8.7 L12.3 5.4" stroke="#444" stroke-width="1.3" stroke-linecap="round"/><path d="M10.3 3.6 L13.8 3.6 L13.8 7.1 Z" fill="#444" stroke="#444" stroke-width="0.6" stroke-linejoin="round"/></svg>
<div class="t" style="left:901.6px;top:637.75px;font-size:14px;color:#222;font-weight:400;transform:scaleX(1.0261);transform-origin:left 0;"><span>CO2 project plan</span></div>
<div class="t" style="left:1135px;top:635.95px;font-size:14px;color:#222;font-weight:400;transform:scaleX(0.9660);transform-origin:left 0;"><span>S4 2022</span></div>
<svg style="position:absolute;left:1308px;top:634.3px" width="16" height="16" viewBox="0 0 16 16"><path d="M8.6 5.05 H5.85 Q3.85 5.05 3.85 7.05 V10.25 Q3.85 12.25 5.85 12.25 H9.85 Q11.85 12.25 11.85 10.25 V8" fill="none" stroke="#444" stroke-width="1.3" stroke-linecap="round"/><path d="M9 8.7 L12.3 5.4" stroke="#444" stroke-width="1.3" stroke-linecap="round"/><path d="M10.3 3.6 L13.8 3.6 L13.8 7.1 Z" fill="#444" stroke="#444" stroke-width="0.6" stroke-linejoin="round"/></svg>
<div class="t" style="left:901.6px;top:674.95px;font-size:14px;color:#222;font-weight:400;transform:scaleX(1.0562);transform-origin:left 0;"><span>Communication plan</span></div>
<div class="t" style="left:1135px;top:673.15px;font-size:14px;color:#222;font-weight:400;transform:scaleX(0.9660);transform-origin:left 0;"><span>S3 2022</span></div>
<svg style="position:absolute;left:1308px;top:671px" width="16" height="16" viewBox="0 0 16 16"><path d="M8.6 5.05 H5.85 Q3.85 5.05 3.85 7.05 V10.25 Q3.85 12.25 5.85 12.25 H9.85 Q11.85 12.25 11.85 10.25 V8" fill="none" stroke="#444" stroke-width="1.3" stroke-linecap="round"/><path d="M9 8.7 L12.3 5.4" stroke="#444" stroke-width="1.3" stroke-linecap="round"/><path d="M10.3 3.6 L13.8 3.6 L13.8 7.1 Z" fill="#444" stroke="#444" stroke-width="0.6" stroke-linejoin="round"/></svg>
<div class="t" style="left:901.6px;top:711.85px;font-size:14px;color:#222;font-weight:400;transform:scaleX(1.0355);transform-origin:left 0;"><span>Management assessment</span></div>
<div class="t" style="left:1137.3px;top:710.05px;font-size:14px;color:#222;font-weight:400;transform:scaleX(0.9660);transform-origin:left 0;"><span>S1 2022</span></div>
<svg style="position:absolute;left:1308px;top:707px" width="16" height="16" viewBox="0 0 16 16"><path d="M8.6 5.05 H5.85 Q3.85 5.05 3.85 7.05 V10.25 Q3.85 12.25 5.85 12.25 H9.85 Q11.85 12.25 11.85 10.25 V8" fill="none" stroke="#444" stroke-width="1.3" stroke-linecap="round"/><path d="M9 8.7 L12.3 5.4" stroke="#444" stroke-width="1.3" stroke-linecap="round"/><path d="M10.3 3.6 L13.8 3.6 L13.8 7.1 Z" fill="#444" stroke="#444" stroke-width="0.6" stroke-linejoin="round"/></svg>
<div style="position:absolute;left:1445px;top:505px;width:338px;height:306px;background:#fff;border-radius:22px;box-shadow:0 1px 1px rgba(120,140,160,0.25)"></div>
<div class="t" style="left:1470.7px;top:521.37px;font-size:20px;color:#222;font-weight:700;transform:scaleX(0.9675);transform-origin:left 0;"><span>Comments</span></div>
<svg style="position:absolute;left:1742px;top:530.1999999999999px" width="12" height="4"><circle cx="1.2" cy="2" r="0.85" fill="#555"/><circle cx="4.6" cy="2" r="0.85" fill="#555"/><circle cx="8" cy="2" r="0.85" fill="#555"/></svg>
<div class="t" style="left:1469.2px;top:561.57px;font-size:13.5px;color:#222;font-weight:400;transform:scaleX(1.0111);transform-origin:left 0;-webkit-text-stroke:0.4px currentColor;"><span>On 4.11.2022, from <span style="color:#1aa64f">Jeroen Casparij</span></span></div>
<div class="t" style="left:1469.2px;top:582.07px;font-size:13.5px;color:#444;font-weight:400;transform:scaleX(1.0054);transform-origin:left 0;"><span>Hi there, could you please add the</span></div>
<div class="t" style="left:1469.2px;top:599.87px;font-size:13.5px;color:#444;font-weight:400;transform:scaleX(1.0224);transform-origin:left 0;"><span>measurement already.</span></div>
<div style="position:absolute;left:1728.3px;top:575.3px;width:23.0px;height:23.0px;background:#ebebeb;border-radius:5px"></div>
<svg style="position:absolute;left:1728.3px;top:575.3px" width="23" height="23"><path d="M8.9 7.9 L13.7 12.2 L8.9 16.4" stroke="#1a1a1a" stroke-width="1.8" fill="none" stroke-linecap="round" stroke-linejoin="round"/></svg>
<div class="t" style="left:1467.6px;top:639.47px;font-size:13.5px;color:#222;font-weight:400;transform:scaleX(1.0131);transform-origin:left 0;-webkit-text-stroke:0.4px currentColor;"><span>On 21.09.2022, from <span style="color:#1aa64f">Louise Rollins</span></span></div>
<div class="t" style="left:1467.6px;top:659.87px;font-size:13.5px;color:#444;font-weight:400;transform:scaleX(0.9993);transform-origin:left 0;"><span>Could you pick up this task for me ?</span></div>
<div style="position:absolute;left:1727.3px;top:644.5px;width:23.0px;height:23.0px;background:#ebebeb;border-radius:5px"></div>
<svg style="position:absolute;left:1727.3px;top:644.5px" width="23" height="23"><path d="M8.9 7.9 L13.7 12.2 L8.9 16.4" stroke="#1a1a1a" stroke-width="1.8" fill="none" stroke-linecap="round" stroke-linejoin="round"/></svg>
<div class="t" style="left:1467.6px;top:717.37px;font-size:13.5px;color:#222;font-weight:400;transform:scaleX(0.9990);transform-origin:left 0;-webkit-text-stroke:0.4px currentColor;"><span>On 16.05.2022, from <span style="color:#1aa64f">Rebecca Greene</span></span></div>
<div class="t" style="left:1467.6px;top:737.97px;font-size:13.5px;color:#444;font-weight:400;transform:scaleX(1.0100);transform-origin:left 0;"><span>When can I expect the report</span></div>
<div class="t" style="left:1467.6px;top:755.77px;font-size:13.5px;color:#444;font-weight:400;transform:scaleX(0.9956);transform-origin:left 0;"><span>from you ?</span></div>
<div style="position:absolute;left:1727.3px;top:731.5px;width:23.0px;height:23.0px;background:#ebebeb;border-radius:5px"></div>
<svg style="position:absolute;left:1727.3px;top:731.5px" width="23" height="23"><path d="M8.9 7.9 L13.7 12.2 L8.9 16.4" stroke="#1a1a1a" stroke-width="1.8" fill="none" stroke-linecap="round" stroke-linejoin="round"/></svg>
</body></html>
